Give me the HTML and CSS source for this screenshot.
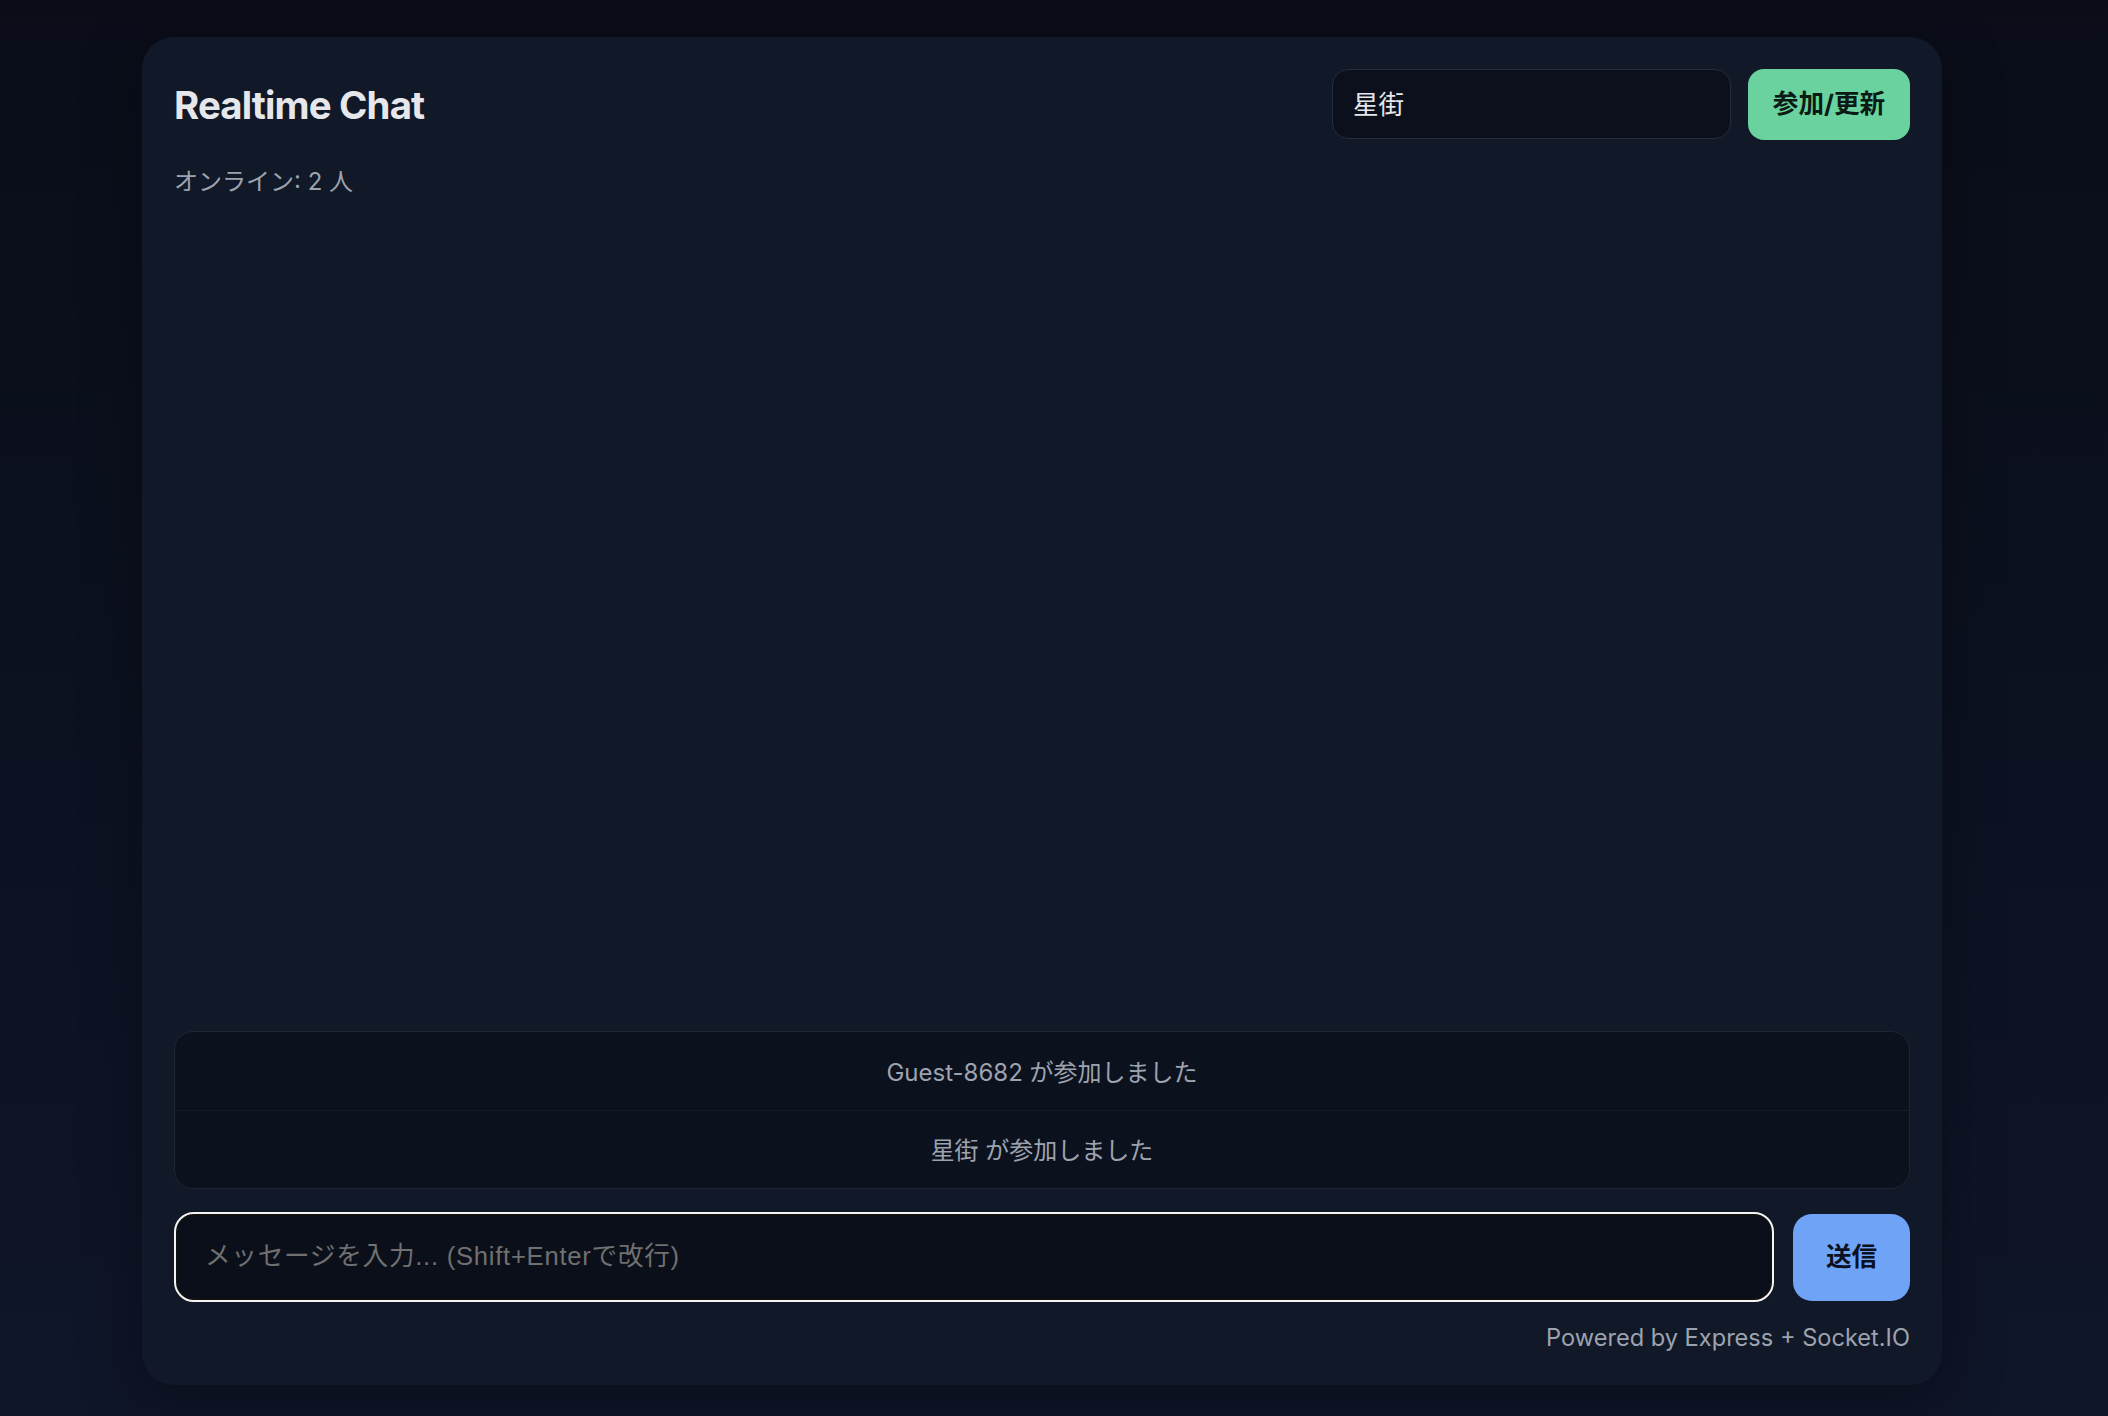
FILE: index.html
```html
<!DOCTYPE html>
<html lang="ja">
<head>
<meta charset="utf-8">
<title>Realtime Chat</title>
<link rel="stylesheet" href="styles.css">
</head>
<body>
<div class="page">
  <main class="card">
    <header class="header">
      <h1 class="title">Realtime Chat</h1>
      <div class="controls">
        <input class="name-input" type="text" value="星街">
        <button class="join-btn">参加/更新</button>
      </div>
    </header>
    <div class="online">オンライン: 2 人</div>
    <section class="messages">
      <ul class="system-list">
        <li class="system-item">Guest-8682 が参加しました</li>
        <li class="system-item">星街 が参加しました</li>
      </ul>
    </section>
    <form class="composer">
      <textarea class="message-input" placeholder="メッセージを入力... (Shift+Enterで改行)"></textarea>
      <button class="send-btn" type="button">送信</button>
    </form>
    <footer class="footer">Powered by Express + Socket.IO</footer>
  </main>
</div>
</body>
</html>
```
FILE: styles.css
```css
* { box-sizing: border-box; }

html, body {
  margin: 0;
  height: 100%;
}

body {
  background: linear-gradient(180deg, #0a0d18 0%, #0c1120 45%, #0f1629 100%);
  font-family: Inter, "Noto Sans CJK JP", sans-serif;
  color: #e5e7eb;
  overflow: hidden;
}

.page {
  display: flex;
  justify-content: center;
  padding: 37px 24px 0 0;
}

.card {
  width: 1800px;
  height: 1348px;
  background: #111827;
  border-radius: 32px;
  padding: 32px;
  display: flex;
  flex-direction: column;
  box-shadow: 0 16px 60px rgba(0, 0, 0, 0.35);
}

.header {
  display: flex;
  justify-content: space-between;
  align-items: center;
  height: 70px;
}

.title {
  margin: 0;
  font-size: 38.4px;
  font-weight: 700;
  letter-spacing: -0.85px;
  color: #e5e7eb;
  line-height: 1.2;
  padding-top: 2px;
}

.controls {
  display: flex;
  align-items: center;
  gap: 17px;
}

.name-input {
  width: 399px;
  height: 70px;
  background: #0b101c;
  border: 1.6px solid #262c39;
  border-radius: 16px;
  padding: 0 20px 4px;
  font-family: Inter, "Noto Sans CJK JP", sans-serif;
  font-size: 25.6px;
  color: #e5e7eb;
  outline: none;
}

.join-btn {
  width: 162px;
  height: 71px;
  border: none;
  border-radius: 16px;
  background: #69d29e;
  color: #0b1a14;
  font-family: Inter, "Noto Sans CJK JP", sans-serif;
  font-size: 25.6px;
  font-weight: 700;
  padding: 0 0 5px;
}

.online {
  margin-top: 25px;
  font-size: 24px;
  line-height: 36px;
  color: #9ca3af;
}

.messages {
  flex: 1;
  display: flex;
  flex-direction: column;
  justify-content: flex-end;
}

.system-list {
  list-style: none;
  margin: 0;
  padding: 0;
  background: #0c111e;
  border: 1.6px solid #1f2533;
  border-radius: 19px;
  overflow: hidden;
}

.system-item {
  height: 78px;
  display: flex;
  align-items: center;
  justify-content: center;
  font-size: 24px;
  color: #9ca3af;
  padding-bottom: 2px;
}

.system-item + .system-item {
  border-top: 1.6px solid #151b28;
}

.composer {
  margin: 23px 0 0;
  display: flex;
  align-items: center;
  gap: 19px;
}

.message-input {
  flex: 1;
  height: 90px;
  resize: none;
  background: #0b0f1a;
  border: 2.5px solid #f4f4f4;
  border-radius: 20px;
  box-shadow: inset 0 0 0 2px #111111;
  padding: 26px 29px 22px;
  font-family: "Liberation Sans", "Noto Sans CJK JP", sans-serif;
  font-size: 25.6px;
  letter-spacing: 0.75px;
  line-height: 32px;
  color: #e5e7eb;
  outline: none;
}

.message-input::placeholder {
  color: #707070;
}

.send-btn {
  width: 117px;
  height: 87px;
  border: none;
  border-radius: 19px;
  background: #6fa3f5;
  color: #0b1120;
  font-family: Inter, "Noto Sans CJK JP", sans-serif;
  font-size: 25.6px;
  font-weight: 700;
  padding: 0 0 6px;
}

.footer {
  margin-top: 21px;
  text-align: right;
  font-size: 23.6px;
  line-height: 30px;
  color: #9ca3af;
}
```
